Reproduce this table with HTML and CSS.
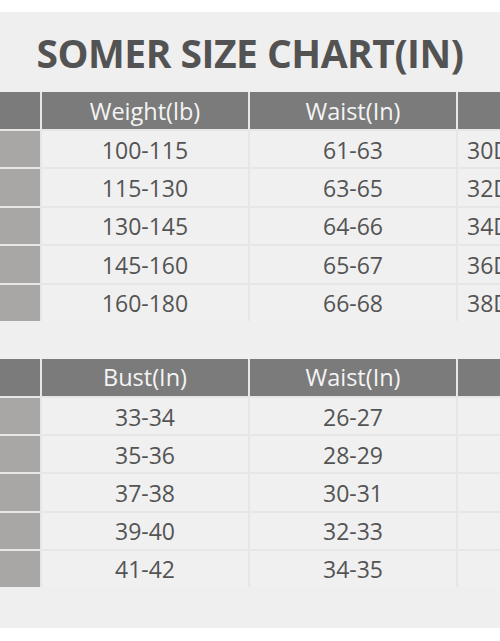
FILE: index.html
```html
<!DOCTYPE html>
<html>
<head>
<meta charset="utf-8">
<link rel="stylesheet" href="styles.css">
</head>
<body>
<div class="sheet">
  <h1 class="title">SOMER SIZE CHART(IN)</h1>
  <div class="table t1">
    <div class="side head"></div>
    <div class="hd">Weight(lb)</div>
    <div class="hd">Waist(In)</div>
    <div class="hd"></div>

    <div class="side"></div><div class="cell">100-115</div><div class="cell">61-63</div><div class="cell left">30D</div>
    <div class="side"></div><div class="cell">115-130</div><div class="cell">63-65</div><div class="cell left">32D</div>
    <div class="side"></div><div class="cell">130-145</div><div class="cell">64-66</div><div class="cell left">34D</div>
    <div class="side"></div><div class="cell">145-160</div><div class="cell">65-67</div><div class="cell left">36D</div>
    <div class="side"></div><div class="cell">160-180</div><div class="cell">66-68</div><div class="cell left">38D</div>
  </div>
  <div class="table t2">
    <div class="side head"></div>
    <div class="hd">Bust(In)</div>
    <div class="hd">Waist(In)</div>
    <div class="hd"></div>

    <div class="side"></div><div class="cell">33-34</div><div class="cell">26-27</div><div class="cell"></div>
    <div class="side"></div><div class="cell">35-36</div><div class="cell">28-29</div><div class="cell"></div>
    <div class="side"></div><div class="cell">37-38</div><div class="cell">30-31</div><div class="cell"></div>
    <div class="side"></div><div class="cell">39-40</div><div class="cell">32-33</div><div class="cell"></div>
    <div class="side"></div><div class="cell">41-42</div><div class="cell">34-35</div><div class="cell"></div>
  </div>
</div>
</body>
</html>
```

FILE: styles.css
```css
html, body {
  margin: 0;
  padding: 0;
  background: #ffffff;
  overflow: hidden;
}
body {
  font-family: "Open Sans", "Liberation Sans", sans-serif;
  width: 500px;
  height: 641px;
}
.sheet {
  margin-top: 12px;
  height: 616px;
  background: #efefef;
  overflow: hidden;
  width: 500px;
}
.title {
  margin: 0;
  height: 80px;
  display: flex;
  align-items: center;
  justify-content: center;
  font-size: 39px;
  font-weight: 700;
  color: #535353;
  letter-spacing: -0.5px;
  white-space: nowrap;
}
.table {
  display: grid;
  grid-template-columns: 40px 206px 206px 206px;
  column-gap: 2px;
  row-gap: 2px;
  width: 664px;
  background: #e6e6e6;
}
.t1 {
  grid-template-rows: 37px repeat(5, 36.4px);
}
.t2 {
  margin-top: 38px;
  grid-template-rows: 37px repeat(5, 36.2px);
}
.hd {
  background: #7b7b7b;
  color: #f4f4f4;
  font-size: 23.5px;
  display: flex;
  align-items: center;
  justify-content: center;
}
.side {
  background: #a9a6a6;
}
.side.head {
  background: #7b7b7b;
}
.cell {
  background: #f0f0f0;
  color: #545454;
  font-size: 23px;
  padding-top: 1px;
  display: flex;
  align-items: center;
  justify-content: center;
}
.cell.left {
  justify-content: flex-start;
  padding-left: 9px;
}
```
